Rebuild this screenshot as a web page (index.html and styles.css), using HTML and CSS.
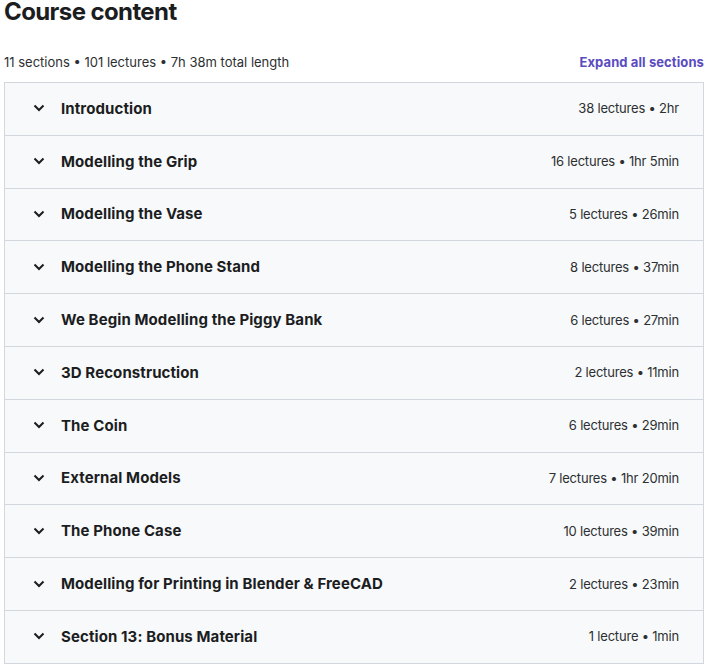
FILE: index.html
```html
<!DOCTYPE html>
<html>
<head>
<meta charset="utf-8">
<link rel="stylesheet" href="styles.css">
</head>
<body>
<div class="page">
  <h2 class="title">Course content</h2>
  <div class="meta">
    <span class="summary">11 sections • 101 lectures • 7h 38m total length</span>
    <span class="expand">Expand all sections</span>
  </div>
  <div class="sections">
    <div class="row"><span class="chev"><svg width="12" height="8" viewBox="0 0 12 8"><path d="M1.5 1.5 L6 6 L10.5 1.5" fill="none" stroke="#1c1d1f" stroke-width="2"/></svg></span><span class="name">Introduction</span><span class="info">38 lectures • 2hr</span></div>
    <div class="row"><span class="chev"><svg width="12" height="8" viewBox="0 0 12 8"><path d="M1.5 1.5 L6 6 L10.5 1.5" fill="none" stroke="#1c1d1f" stroke-width="2"/></svg></span><span class="name">Modelling the Grip</span><span class="info">16 lectures • 1hr 5min</span></div>
    <div class="row"><span class="chev"><svg width="12" height="8" viewBox="0 0 12 8"><path d="M1.5 1.5 L6 6 L10.5 1.5" fill="none" stroke="#1c1d1f" stroke-width="2"/></svg></span><span class="name">Modelling the Vase</span><span class="info">5 lectures • 26min</span></div>
    <div class="row"><span class="chev"><svg width="12" height="8" viewBox="0 0 12 8"><path d="M1.5 1.5 L6 6 L10.5 1.5" fill="none" stroke="#1c1d1f" stroke-width="2"/></svg></span><span class="name">Modelling the Phone Stand</span><span class="info">8 lectures • 37min</span></div>
    <div class="row"><span class="chev"><svg width="12" height="8" viewBox="0 0 12 8"><path d="M1.5 1.5 L6 6 L10.5 1.5" fill="none" stroke="#1c1d1f" stroke-width="2"/></svg></span><span class="name">We Begin Modelling the Piggy Bank</span><span class="info">6 lectures • 27min</span></div>
    <div class="row"><span class="chev"><svg width="12" height="8" viewBox="0 0 12 8"><path d="M1.5 1.5 L6 6 L10.5 1.5" fill="none" stroke="#1c1d1f" stroke-width="2"/></svg></span><span class="name">3D Reconstruction</span><span class="info">2 lectures • 11min</span></div>
    <div class="row"><span class="chev"><svg width="12" height="8" viewBox="0 0 12 8"><path d="M1.5 1.5 L6 6 L10.5 1.5" fill="none" stroke="#1c1d1f" stroke-width="2"/></svg></span><span class="name">The Coin</span><span class="info">6 lectures • 29min</span></div>
    <div class="row"><span class="chev"><svg width="12" height="8" viewBox="0 0 12 8"><path d="M1.5 1.5 L6 6 L10.5 1.5" fill="none" stroke="#1c1d1f" stroke-width="2"/></svg></span><span class="name">External Models</span><span class="info">7 lectures • 1hr 20min</span></div>
    <div class="row"><span class="chev"><svg width="12" height="8" viewBox="0 0 12 8"><path d="M1.5 1.5 L6 6 L10.5 1.5" fill="none" stroke="#1c1d1f" stroke-width="2"/></svg></span><span class="name">The Phone Case</span><span class="info">10 lectures • 39min</span></div>
    <div class="row"><span class="chev"><svg width="12" height="8" viewBox="0 0 12 8"><path d="M1.5 1.5 L6 6 L10.5 1.5" fill="none" stroke="#1c1d1f" stroke-width="2"/></svg></span><span class="name">Modelling for Printing in Blender &amp; FreeCAD</span><span class="info">2 lectures • 23min</span></div>
    <div class="row"><span class="chev"><svg width="12" height="8" viewBox="0 0 12 8"><path d="M1.5 1.5 L6 6 L10.5 1.5" fill="none" stroke="#1c1d1f" stroke-width="2"/></svg></span><span class="name">Section 13: Bonus Material</span><span class="info">1 lecture • 1min</span></div>
  </div>
</div>
</body>
</html>
```
FILE: styles.css
```css
* { box-sizing: border-box; }
body {
  margin: 0;
  background: #ffffff;
  font-family: Inter, "Noto Sans", sans-serif;
  color: #1c1d1f;
}
.page {
  width: 704px;
  padding-left: 4px;
}
.title {
  margin: 0;
  font-size: 24px;
  line-height: 24px;
  font-weight: 700;
  letter-spacing: -0.6px;
}
.meta {
  display: flex;
  justify-content: space-between;
  align-items: center;
  margin-top: 30px;
  height: 16px;
  margin-bottom: 12px;
  font-size: 13px;
}
.summary {
  color: #2d2f31;
  letter-spacing: 0;
}
.expand {
  color: #5a4bbf;
  font-weight: 700;
  letter-spacing: 0.1px;
}
.sections {
  border: 1px solid #d1d7dc;
  border-bottom: none;
  width: 700px;
}
.row {
  display: flex;
  align-items: center;
  height: 52.8px;
  background: #f7f9fa;
  border-bottom: 1px solid #d1d7dc;
  padding: 0 24px 1px 28px;
}
.chev {
  display: flex;
  width: 12px;
  margin-right: 16px;
}
.name {
  flex: 1;
  font-size: 15px;
  font-weight: 700;
  letter-spacing: 0.1px;
}
.info {
  font-size: 13px;
  color: #2d2f31;
  letter-spacing: -0.2px;
}
```
